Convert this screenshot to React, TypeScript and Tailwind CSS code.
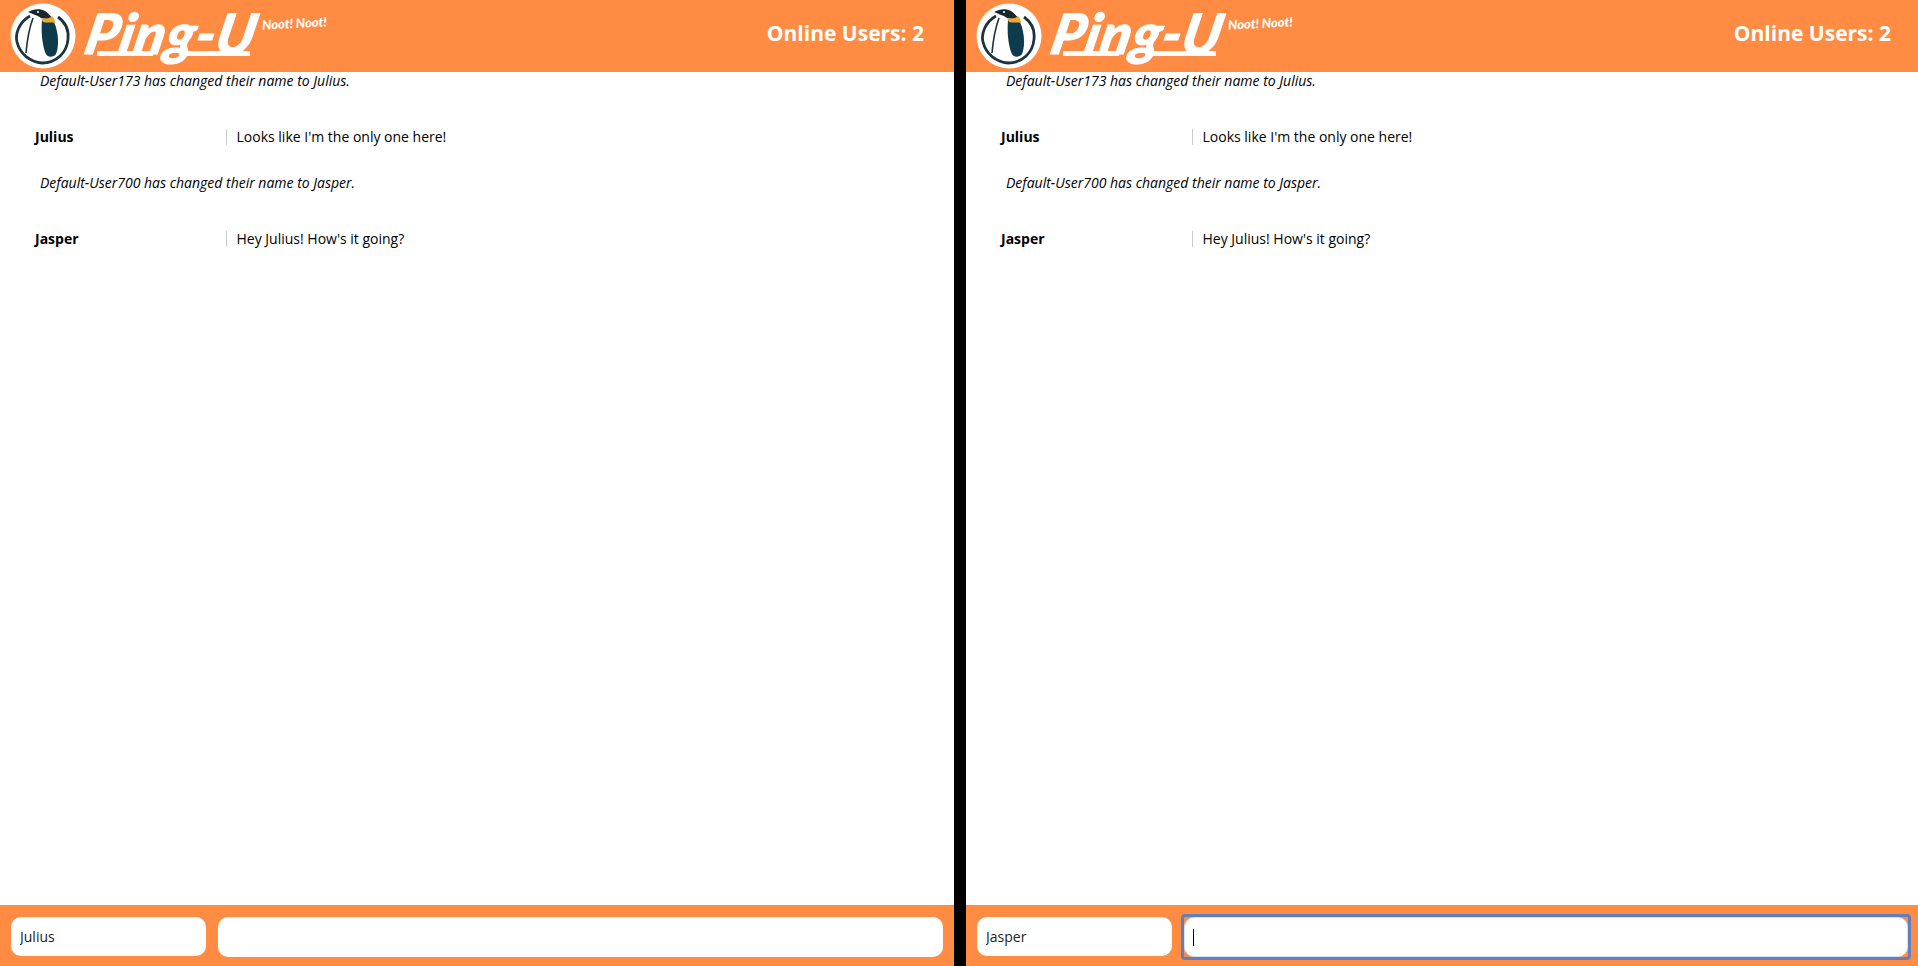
const openSans = "font-['Open_Sans',sans-serif]";

function PenguinLogo() {
    return (
        <svg width="66" height="66" viewBox="0 0 66 66" className="shrink-0">
            <circle cx="33" cy="33" r="32.5" fill="#ffffff" />
            {/* ring, broken at the top where the head sits */}
            <path d="M20 13 C9 19 5 31 7 39 C10 51 20 59 32 60 C46 60 57 50 58 36 C59 27 55 19 48 14" fill="none" stroke="#1c3440" strokeWidth="2.8" />
            {/* belly outline */}
            <path d="M23 15 C19 26 17 38 16 50" fill="none" stroke="#1c3440" strokeWidth="1.6" />
            {/* body */}
            <path d="M32 17 C31 28 32 40 35 49 C37 55 43 55 46 51 C49 44 49 30 44 19 C40 15 35 15 32 17 Z" fill="#0d3b4c" />
            {/* head and beak */}
            <path d="M18 9 C23 6 30 5 35 8 C38 10 40 12 42 15 C38 16 34 16 31 15 C27 12 22 11 18 9 Z" fill="#17282f" />
            <path d="M31 15 C35 16 39 16 42 13 C44 15 45 17 45 20 C42 19 36 20 33 19 Z" fill="#f2a62e" />
            <circle cx="28" cy="9" r="1" fill="#ffffff" />
        </svg>
    );
}

function Brand() {
    return (
        <div className="flex items-start ml-[10px] mt-[3px]">
            <PenguinLogo />
            <div className="relative ml-[11px] w-[175px] h-[60px]">
                <span className="absolute left-0 top-0 font-['Lato',sans-serif] italic font-black text-[56px] leading-[60px] tracking-[1px] text-white whitespace-nowrap -skew-x-12 [-webkit-text-stroke:1px_white]">
                    Ping-U
                </span>
                <div className="absolute left-[10px] top-[48px] w-[56px] h-[5px] bg-white" />
                <div className="absolute left-[92px] top-[48px] w-[71px] h-[5px] bg-white" />
            </div>
            <span className="mt-[12px] font-['Lato',sans-serif] italic font-black text-[13px] leading-[16px] text-white whitespace-nowrap -rotate-3">
                Noot! Noot!
            </span>
        </div>
    );
}

function SystemLine({ text, className }: { text: string; className: string }) {
    return <p className={`pl-[40px] text-[14px] leading-[20px] italic text-black ${className}`}>{text}</p>;
}

function ChatLine({ name, text, className }: { name: string; text: string; className: string }) {
    return (
        <div className={`flex items-center pl-[35px] text-[14px] leading-[16px] text-black ${className}`}>
            <span className="w-[191px] font-bold">{name}</span>
            <span className="pl-[9.5px] border-l border-[#cccccc]">{text}</span>
        </div>
    );
}

function ChatPanel({ width, user, focused }: { width: string; user: string; focused: boolean }) {
    return (
        <div className={`flex flex-col h-full bg-white shrink-0 ${width}`}>
            <header className="flex justify-between h-[72px] bg-[#ff8c42] shrink-0">
                <Brand />
                <span className={`mt-[19px] text-[21px] leading-[28px] font-bold text-white ${focused ? "mr-[27px]" : "mr-[30px]"}`}>Online Users: 2</span>
            </header>

            <div className="flex-1">
                <SystemLine text="Default-User173 has changed their name to Julius." className="mt-[-1px]" />
                <ChatLine name="Julius" text="Looks like I'm the only one here!" className="mt-[38px]" />
                <SystemLine text="Default-User700 has changed their name to Jasper." className="mt-[28px]" />
                <ChatLine name="Jasper" text="Hey Julius! How's it going?" className="mt-[38px]" />
            </div>

            <div className={`flex gap-[12px] h-[61px] pt-[12px] pl-[11px] bg-[#ff8c42] shrink-0 ${focused ? "pr-[10px]" : "pr-[11px]"}`}>
                <input
                    defaultValue={user}
                    className={`w-[195px] h-[39px] px-[9px] rounded-[10px] bg-white text-[14px] text-[#222222] outline-none ${openSans}`}
                />
                <div className="relative flex-1 h-[40px]">
                    <input
                        className={`w-full h-full rounded-[10px] bg-white outline-none ${focused ? "border border-[#cfe0f8]" : ""}`}
                    />
                    {focused && (
                        <>
                            <div className="absolute -inset-[3px] rounded-[4px] border-[3px] border-[#5f7fbe] pointer-events-none" />
                            <div className="absolute left-[9px] top-[12px] w-px h-[17px] bg-black" />
                        </>
                    )}
                </div>
            </div>
        </div>
    );
}

export default function App() {
    return (
        <div className={`flex w-[1918px] h-[966px] bg-black overflow-hidden ${openSans}`}>
            <ChatPanel width="w-[954px]" user="Julius" focused={false} />
            <div className="w-[12px] shrink-0" />
            <ChatPanel width="w-[952px]" user="Jasper" focused={true} />
        </div>
    );
}
